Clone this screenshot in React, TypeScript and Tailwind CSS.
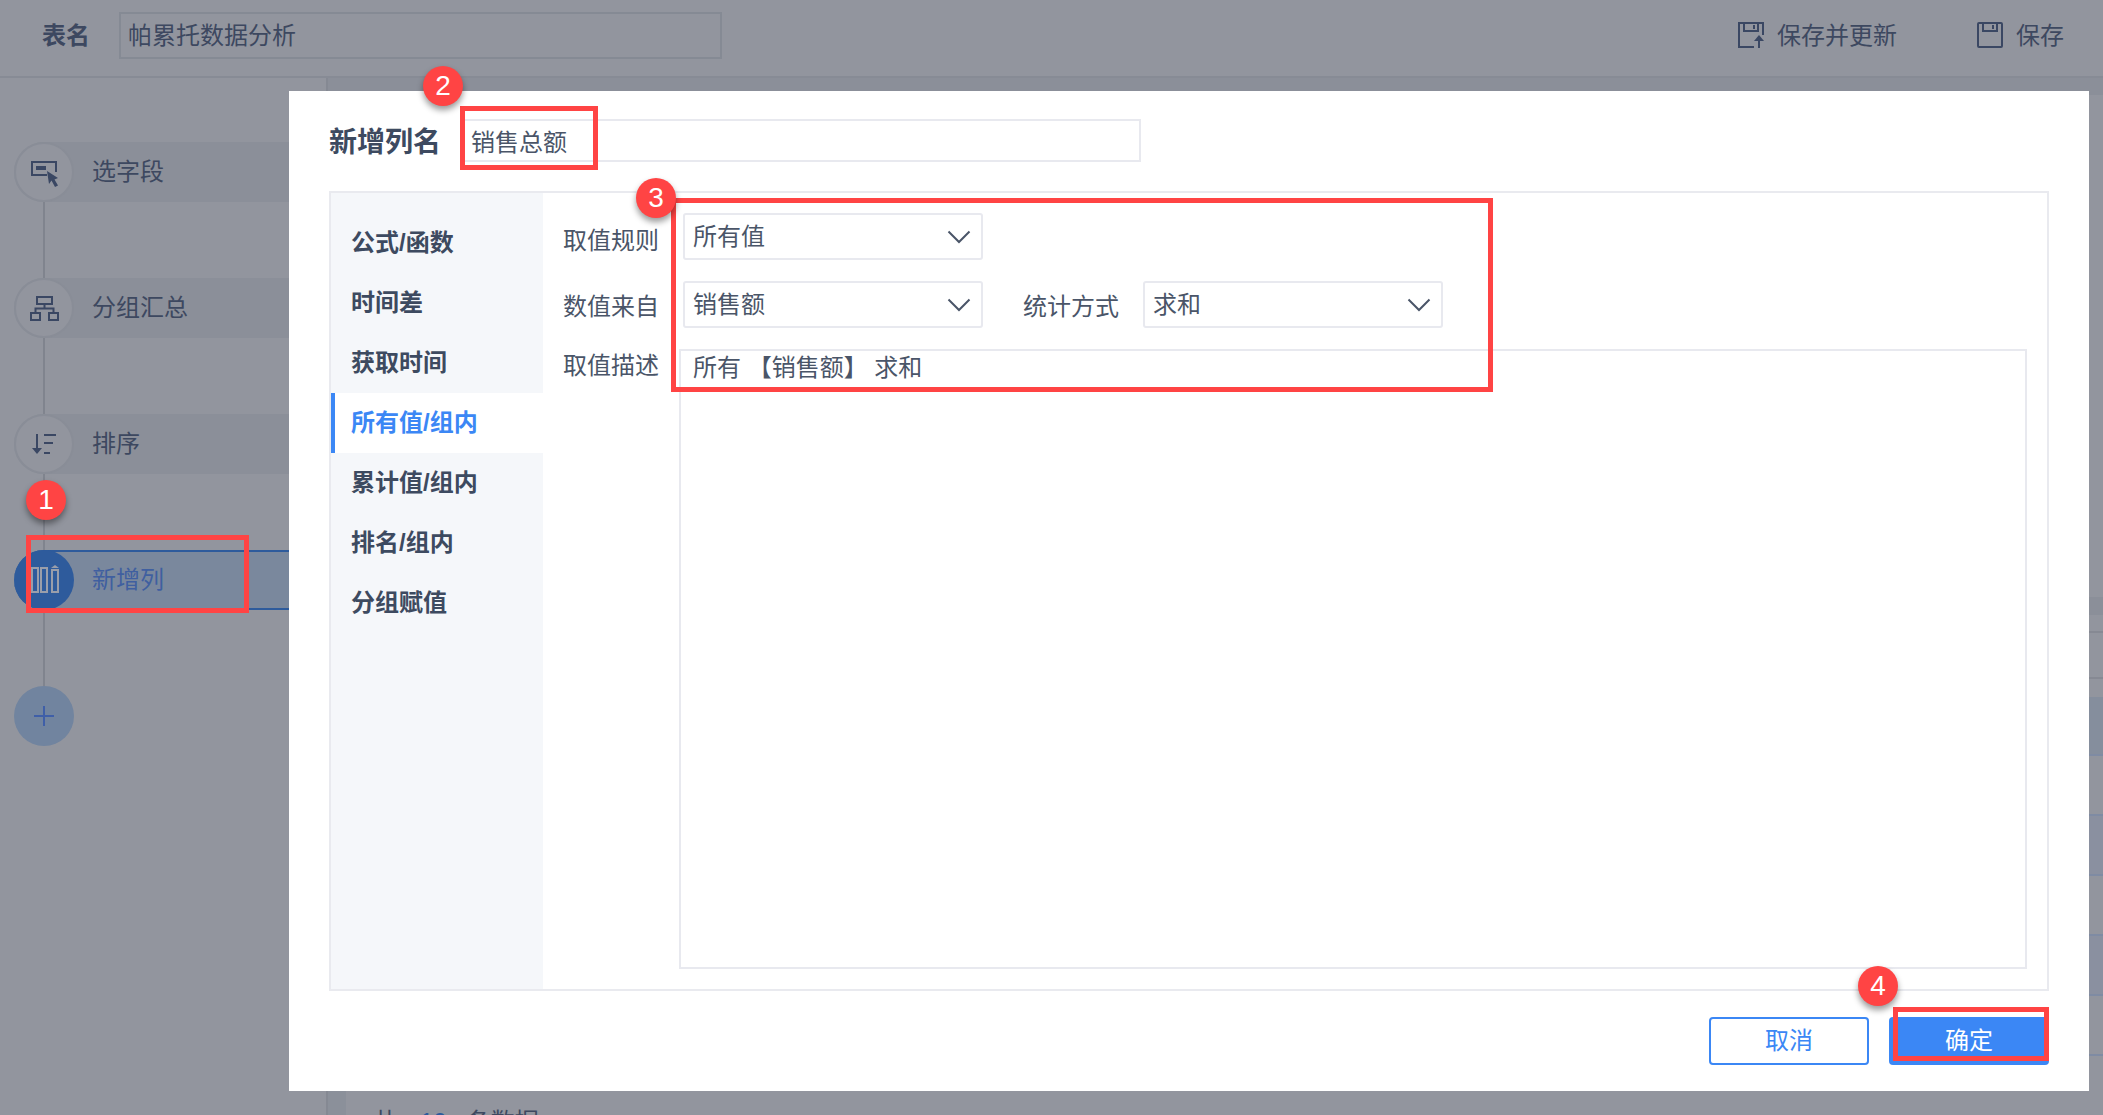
const FONT = "font-['Liberation_Sans','Noto_Sans_CJK_SC',sans-serif]";

type Step = { label: string; icon: React.ReactNode; active?: boolean };

function PickIcon() {
  return (
    <svg width="56" height="56" viewBox="16 144 56 56">
      <path d="M47 175H32V162H56V172" fill="none" stroke="#3a4763" strokeWidth="2" />
      <rect x="36" y="166" width="10" height="4" fill="#3a4763" />
      <path d="M47 171L49 184L51.500 180.500L55 187L58 185.500L54.500 179.500L58 178Z" fill="#3a4763" />
    </svg>
  );
}

function GroupIcon() {
  return (
    <svg width="56" height="56" viewBox="16 280 56 56" fill="none" stroke="#3a4763" strokeWidth="2">
      <rect x="37" y="297" width="15" height="7" />
      <rect x="31" y="313" width="9" height="7" />
      <rect x="49" y="313" width="9" height="7" />
      <path d="M44.500 304V308.500M35.500 313V308.500H53.500V313" />
    </svg>
  );
}

function SortIcon() {
  return (
    <svg width="56" height="56" viewBox="16 416 56 56" fill="none" stroke="#3a4763" strokeWidth="2">
      <path d="M37 434V448" />
      <path d="M32 448H42L37 454Z" fill="#3a4763" stroke="none" />
      <path d="M44 435H56M44 443H53M44 453H50" />
    </svg>
  );
}

function ColumnIcon() {
  return (
    <svg width="56" height="56" viewBox="16 552 56 56" fill="none" stroke="#9a9eaa" strokeWidth="2">
      <rect x="32" y="568" width="6" height="24" />
      <rect x="41" y="568" width="6" height="24" />
      <rect x="52" y="570" width="6" height="22" />
      <path d="M51 568L55 565L59 568Z" fill="#9a9eaa" stroke="none" />
    </svg>
  );
}

function SaveUpdateIcon() {
  return (
    <svg width="26" height="26" viewBox="0 0 26 26" fill="none" stroke="#3a4763" strokeWidth="2">
      <path d="M16 25H1V1H25V13" />
      <path d="M6 1V9H20V1M16 3V7" />
      <path d="M16 19L21 13L26 19Z" fill="#3a4763" stroke="none" />
      <path d="M21 18V26" />
    </svg>
  );
}

function SaveIcon() {
  return (
    <svg width="26" height="26" viewBox="0 0 26 26" fill="none" stroke="#3a4763" strokeWidth="2">
      <rect x="1" y="1" width="24" height="24" rx="1" />
      <path d="M6 1V9H20V1M16 3V7" />
    </svg>
  );
}

function Chevron() {
  return (
    <svg width="24" height="14" viewBox="0 0 24 14" fill="none" stroke="#4a5568" strokeWidth="2">
      <path d="M1.500 1.500L12 12L22.500 1.500" />
    </svg>
  );
}

function Select({ value }: { value: string }) {
  return (
    <div className="flex h-[47px] w-[300px] items-center justify-between rounded-[3px] border-2 border-[#e8e9ef] pl-[8px] pr-[10px] text-[24px] text-[#4a5568]">
      <span>{value}</span>
      <Chevron />
    </div>
  );
}

function Badge({ n, className }: { n: number; className: string }) {
  return (
    <div
      className={`absolute flex h-[40px] w-[40px] items-center justify-center rounded-full bg-[#ff4444] font-['Liberation_Sans',sans-serif] text-[28px] text-white shadow-[0_4px_6px_rgba(0,0,0,0.4)] ${className}`}
    >
      {n}
    </div>
  );
}

const steps: Step[] = [
  { label: '选字段', icon: <PickIcon /> },
  { label: '分组汇总', icon: <GroupIcon /> },
  { label: '排序', icon: <SortIcon /> },
  { label: '新增列', icon: <ColumnIcon />, active: true }
];

const navItems = ['公式/函数', '时间差', '获取时间', '所有值/组内', '累计值/组内', '排名/组内', '分组赋值'];

export default function App() {
  return (
    <div className={`relative flex h-[1115px] w-[2103px] flex-col overflow-hidden bg-[#92959e] ${FONT}`}>
      <header className="flex h-[78px] shrink-0 items-center border-b-2 border-[#878b95] pb-[6px] pl-[42px] pr-[39px] text-[24px] text-[#3d4860]">
        <span className="pt-[2px] font-bold">表名</span>
        <div className="ml-[29px] flex h-[47px] w-[603px] items-center border-2 border-[#858a94] pl-[7px] pt-[2px]">帕累托数据分析</div>
        <div className="ml-auto flex items-center gap-[13px]">
          <SaveUpdateIcon />
          <span className="pt-[2px]">保存并更新</span>
        </div>
        <div className="ml-[80px] flex items-center gap-[13px]">
          <SaveIcon />
          <span className="pt-[2px]">保存</span>
        </div>
      </header>

      <div className="flex flex-1">
        <aside className="w-[328px] shrink-0 border-r-2 border-[#858993] pl-[14px] pt-[64px]">
          {steps.map((s) => (
            <div key={s.label}>
              <div
                className={
                  s.active
                    ? 'box-border flex h-[60px] items-center rounded-l-full border-y-2 border-[#2e5b9c] bg-[#7a889d] text-[24px] text-[#3f5fa0]'
                    : 'flex h-[60px] items-center rounded-l-full bg-[#8b8f99] text-[24px] text-[#3d4860]'
                }
              >
                <div
                  className={
                    s.active
                      ? 'flex h-[60px] w-[60px] shrink-0 items-center justify-center rounded-full bg-[#2e5b9c]'
                      : 'flex h-[60px] w-[60px] shrink-0 items-center justify-center rounded-full border-2 border-[#898d97] bg-[#92959e]'
                  }
                >
                  {s.icon}
                </div>
                <span className="ml-[18px] pb-[1px]">{s.label}</span>
              </div>
              <div className="ml-[29px] h-[76px] w-[2px] bg-[#80848e]" />
            </div>
          ))}
          <div className="flex h-[60px] w-[60px] items-center justify-center rounded-full bg-[#71849f]">
            <svg width="20" height="20" viewBox="0 0 20 20" stroke="#3f5fa8" strokeWidth="2">
              <path d="M10 0V20M0 10H20" />
            </svg>
          </div>
        </aside>

        <main className="flex flex-1 flex-col">
          <div className="h-[17px] bg-[#8b8f99]" />
          <div className="h-[502px]" />
          <div className="h-[18px] bg-[#8b8f99]" />
          <div className="box-border h-[18px] border-b-2 border-[#868993]" />
          <div className="box-border h-[46px] border-b-2 border-[#868993]" />
          <div className="h-[18px]" />
          <div className="box-border h-[59px] border-b-2 border-[#7f8ba3] bg-[#858e9d]" />
          <div className="box-border h-[60px] border-b-2 border-[#7f8ba3]" />
          <div className="box-border h-[60px] border-b-2 border-[#7f8ba3] bg-[#8a90a0]" />
          <div className="box-border h-[60px] border-b-2 border-[#7f8ba3]" />
          <div className="box-border h-[60px] border-b-2 border-[#7f8ba3] bg-[#8a90a0]" />
          <div className="box-border h-[60px] border-b-2 border-[#7f8ba3]" />
          <div className="flex flex-1 pt-[49px]">
            <div className="-mt-[49px] w-[18px] bg-[#8b909a]" />
            <div className="ml-[27px] flex text-[24px] leading-[34px] text-[#3d4860]">
              <span>共</span>
              <span className="ml-[23px] text-[#2e5b9c]">10</span>
              <span className="ml-[20px]">条数据</span>
            </div>
          </div>
        </main>
      </div>

      {/* dialog */}
      <div className="absolute left-[289px] top-[91px] flex h-[1000px] w-[1800px] flex-col bg-white pl-[40px] pr-[40px] pt-[28px]">
        <div className="flex h-[43px] items-center">
          <span className="w-[133px] pt-[5px] text-[28px] font-bold leading-[32px] text-[#3d4a60]">新增列名</span>
          <div className="flex h-[43px] w-[679px] items-center border-2 border-[#e8e9ef] pl-[7px] pt-[5px] text-[24px] text-[#4a5568]">销售总额</div>
        </div>

        <div className="mt-[29px] flex h-[800px] border-2 border-[#e9eaef]">
          <nav className="w-[212px] shrink-0 bg-[#f5f7fa] pt-[20px] text-[24px] font-bold text-[#3d4a60]">
            {navItems.map((item) => (
              <div
                key={item}
                className={
                  item === '所有值/组内'
                    ? 'flex h-[60px] items-center border-l-4 border-[#3b87f5] bg-white pl-[16px] text-[#3b87f5]'
                    : 'flex h-[60px] items-center pl-[20px]'
                }
              >
                {item}
              </div>
            ))}
          </nav>

          <div className="flex-1 pl-[20px] pt-[20px] text-[24px] text-[#4a5568]">
            <div className="flex items-center">
              <span className="w-[120px] pt-[9px]">取值规则</span>
              <Select value="所有值" />
            </div>
            <div className="mt-[21px] flex items-center">
              <span className="w-[120px] pt-[5px]">数值来自</span>
              <Select value="销售额" />
              <span className="ml-[40px] w-[120px] pt-[5px]">统计方式</span>
              <Select value="求和" />
            </div>
            <div className="mt-[21px] flex">
              <span className="w-[116px] leading-[34px]">取值描述</span>
              <div className="h-[620px] w-[1348px] border-2 border-[#e8e9ef] pl-[12px] leading-[34px]">所有 【销售额】 求和</div>
            </div>
          </div>
        </div>

        <div className="mt-[26px] flex justify-end gap-[20px] text-[24px]">
          <button className="h-[48px] w-[160px] rounded-[4px] border-2 border-[#3b87f5] text-[#3b87f5]">取消</button>
          <button className="h-[48px] w-[160px] rounded-[4px] bg-[#3b87f5] text-white">确定</button>
        </div>
      </div>

      {/* annotations */}
      <div className="absolute left-[26px] top-[535px] h-[78px] w-[223px] border-[5px] border-[#ff4444]" />
      <div className="absolute left-[460px] top-[106px] h-[64px] w-[138px] border-[5px] border-[#ff4444]" />
      <div className="absolute left-[671px] top-[198px] h-[194px] w-[822px] border-[5px] border-[#ff4444]" />
      <div className="absolute left-[1893px] top-[1007px] h-[54px] w-[156px] border-[5px] border-[#ff4444]" />
      <Badge n={1} className="left-[26px] top-[480px]" />
      <Badge n={2} className="left-[423px] top-[66px]" />
      <Badge n={3} className="left-[636px] top-[178px]" />
      <Badge n={4} className="left-[1858px] top-[966px]" />
    </div>
  );
}
